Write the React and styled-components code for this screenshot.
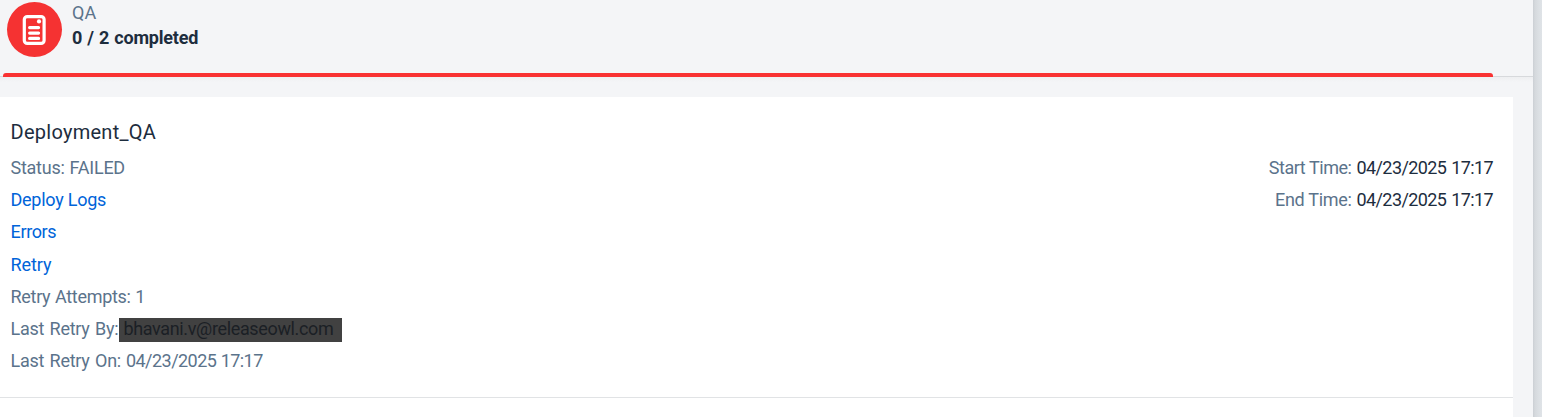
import React from "react";
import styled, { createGlobalStyle } from "styled-components";

const GlobalStyle = createGlobalStyle`
  * { box-sizing: border-box; }
  body {
    margin: 0;
    background: #f4f5f7;
    font-family: Roboto, "Liberation Sans", sans-serif;
    font-size: 18px;
    color: #1d2d3e;
    overflow: hidden;
  }
`;

const Page = styled.div`
  display: flex;
  height: 417px;
`;

const Panel = styled.main`
  width: 1533px;
  height: 417px;
`;

const Gutter = styled.aside`
  flex: 1;
  background: linear-gradient(to right, #cbcfd4 0, #d5d9dd 2px, #dce0e4 6px, #dfe3e7 9px);
`;

const StepHeader = styled.header`
  display: flex;
  height: 77px;
  padding: 2px 0 0 7px;
  gap: 10px;
  border-bottom: 1px solid #d7d9dc;
`;

const StepBadge = styled.div`
  width: 55px;
  height: 55px;
  border-radius: 50%;
  background: #f53232;
`;

const StepText = styled.div`
  display: flex;
  flex-direction: column;
  line-height: 25px;
  margin-top: -2px;
`;

const Text = styled.span`
  letter-spacing: ${(p) => p.$spacing || 0}px;
  word-spacing: ${(p) => p.$words || 0}px;
  white-space: pre;
`;

const StepName = styled(Text)`
  color: #5b738b;
`;

const StepProgress = styled(Text)`
  font-weight: 700;
`;

const ActiveBar = styled.div`
  width: 1490px;
  height: 4px;
  margin: -4px 0 0 3px;
  position: relative;
  background: #f93232;
  border-radius: 3px 3px 0 0;
`;

const Shade = styled.div`
  height: 20px;
  background: linear-gradient(#eeeff1, #f4f5f7 5px);
`;

const Card = styled.section`
  display: flex;
  justify-content: space-between;
  width: 1513px;
  height: 301px;
  padding: 20px 20px 0 10.5px;
  background: #fff;
  border-bottom: 1px solid #e1e3e5;
`;

const NextCard = styled.div`
  width: 1513px;
  height: 19px;
  background: #fff;
`;

const Details = styled.div`
  display: flex;
  flex-direction: column;
`;

const Title = styled(Text)`
  font-size: 20px;
  line-height: 30px;
  height: 34.95px;
`;

const Row = styled.div`
  display: flex;
  height: 32.2px;
  line-height: 32px;
  color: #5b738b;
`;

const Link = styled(Text).attrs({ as: "a" })`
  color: #0064d9;
`;

const Times = styled.div`
  display: flex;
  flex-direction: column;
  align-items: flex-end;
  padding-top: 34.95px;
`;

const DateValue = styled(Text)`
  margin-left: 5px;
`;

const TimeValue = styled(DateValue)`
  color: #1d2d3e;
`;

const Redacted = styled(Text)`
  width: 223px;
  height: 24px;
  margin: 5px 0 0 1px;
  padding-left: 4px;
  line-height: 22px;
  background: #414141;
  color: #1b1f25;
`;

const DocumentIcon = () => (
  <svg width="55" height="55" viewBox="0 0 55 55" fill="none" stroke="#fff">
    <rect x="17.3" y="14.6" width="19.8" height="26.8" rx="3" strokeWidth="3.2" />
    <circle cx="32" cy="19.4" r="2.1" fill="#fff" stroke="none" />
    <path d="M22.6 25.6h9M22.6 31.1h9M22.6 36.4h9" strokeWidth="3.1" strokeLinecap="round" />
  </svg>
);

export default function App() {
  return (
    <Page>
      <GlobalStyle />
      <Panel>
        <StepHeader>
          <StepBadge><DocumentIcon /></StepBadge>
          <StepText>
            <StepName $spacing={0}>QA</StepName>
            <StepProgress $spacing={-0.2} $words={0.9}>0 / 2 completed</StepProgress>
          </StepText>
        </StepHeader>
        <ActiveBar />
        <Shade />
        <Card>
          <Details>
            <Title $spacing={0.27}>Deployment_QA</Title>
            <Row><Text $spacing={-0.25} $words={0.8}>Status: FAILED</Text></Row>
            <Row><Link $spacing={-0.25}>Deploy Logs</Link></Row>
            <Row><Link $spacing={-0.35}>Errors</Link></Row>
            <Row><Link $spacing={-0.1}>Retry</Link></Row>
            <Row><Text $spacing={-0.3} $words={0.5}>Retry Attempts: 1</Text></Row>
            <Row>
              <Text $spacing={-0.25} $words={1.2}>Last Retry By:</Text>
              <Redacted $spacing={-0.35}>bhavani.v@releaseowl.com</Redacted>
            </Row>
            <Row>
              <Text $spacing={-0.25} $words={1.2}>Last Retry On:</Text>
              <DateValue $spacing={-0.55} $words={0.5}>04/23/2025 17:17</DateValue>
            </Row>
          </Details>
          <Times>
            <Row><Text $spacing={-0.45}>Start Time:</Text><TimeValue $spacing={-0.6} $words={1}>04/23/2025 17:17</TimeValue></Row>
            <Row><Text $spacing={-0.3}>End Time:</Text><TimeValue $spacing={-0.6} $words={1}>04/23/2025 17:17</TimeValue></Row>
          </Times>
        </Card>
        <NextCard />
      </Panel>
      <Gutter />
    </Page>
  );
}
